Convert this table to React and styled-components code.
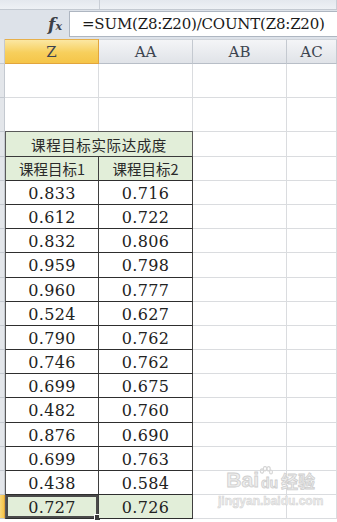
import React from "react";
import styled, { createGlobalStyle } from "styled-components";

const Global = createGlobalStyle`
  html, body { margin: 0; padding: 0; background: #ffffff; }
  body { width: 337px; height: 522px; overflow: hidden; }
`;

const SERIF = `"DejaVu Serif", "Liberation Serif", serif`;

const z = ["0.833", "0.612", "0.832", "0.959", "0.960", "0.524", "0.790", "0.746", "0.699", "0.482", "0.876", "0.699", "0.438", "0.727"];
const aa = ["0.716", "0.722", "0.806", "0.798", "0.777", "0.627", "0.762", "0.762", "0.675", "0.760", "0.690", "0.763", "0.584", "0.726"];

const COLS = "5px 94px 94px 94px 1fr";

const App = () => {
  // row tops in the shot land on 180, 204, 229 ... 519
  const heights = z.map((_, i) => Math.round(180 + (i + 1) * 24.15) - Math.round(180 + i * 24.15));

  return (
    <Page>
      <Global />
      <Ribbon>
        <RibbonPart $w={100} />
        <RibbonPart $w={237} />
      </Ribbon>
      <FormulaBar>
        <FxBox>
          <Fx>f<small>x</small></Fx>
        </FxBox>
        <FormulaInput>=SUM(Z8:Z20)/COUNT(Z8:Z20)</FormulaInput>
      </FormulaBar>
      <Gap />
      <HeaderRow>
        <RowHead />
        <ColHead $active>Z</ColHead>
        <ColHead>AA</ColHead>
        <ColHead>AB</ColHead>
        <ColHead>AC</ColHead>
      </HeaderRow>

      <Row $h={34}>
        <RowHead />
        <Cell /><Cell /><Cell /><Cell />
      </Row>
      <Row $h={34}>
        <RowHead />
        <Cell /><Cell /><Cell /><Cell />
      </Row>

      <Row $h={25}>
        <RowHead />
        <TitleCell>课程目标实际达成度</TitleCell>
        <Cell /><Cell />
      </Row>
      <Row $h={24}>
        <RowHead />
        <SubCell>课程目标1</SubCell>
        <SubCell $last>课程目标2</SubCell>
        <Cell /><Cell />
      </Row>

      {z.map((v, i) => {
        const last = i === z.length - 1;
        return (
          <Row $h={heights[i]} key={`r${i}`}>
            <RowHead $active={last} />
            <DataCell $green={last} $selected={last}>
              {v}
              {last && <Handle />}
            </DataCell>
            <DataCell $green={last} $last>{aa[i]}</DataCell>
            <Cell /><Cell />
          </Row>
        );
      })}

      <Watermark>
        <Brand>
          Bai
          <svg width="14" height="16" viewBox="0 0 14 16">
            <g fill="none" stroke="#d6d6d6" strokeWidth="1.2">
              <ellipse cx="3" cy="5" rx="1.6" ry="2.2" />
              <ellipse cx="6" cy="2.6" rx="1.6" ry="2.2" />
              <ellipse cx="9.6" cy="2.8" rx="1.6" ry="2.2" />
              <ellipse cx="12" cy="6" rx="1.4" ry="2" />
            </g>
          </svg>
          <Du>du</Du>
          <Jy>经验</Jy>
        </Brand>
        <Url>jingyan.baidu.com</Url>
      </Watermark>
    </Page>
  );
};

export default App;

const Page = styled.div`
  position: relative;
  width: 337px;
  height: 522px;
  overflow: hidden;
  background: #ffffff;
  font-family: ${SERIF};
`;

const Ribbon = styled.div`
  display: flex;
  height: 9px;
  background: linear-gradient(#e4e8ee, #eef1f5);
  border-bottom: 1px solid #c3c9d1;
  overflow: hidden;
`;

  const RibbonPart = styled.div`
    width: ${p => p.$w}px;
    border-right: 1px solid #c9ced6;
  `;

const FormulaBar = styled.div`
  display: flex;
  height: 26px;
  background: #dde2e9;
  padding-top: 1px;
`;

  const FxBox = styled.div`
    width: 69px;
    display: flex;
    align-items: center;
    justify-content: flex-end;
    padding-right: 7px;
    box-sizing: border-box;
  `;

  const Fx = styled.span`
    font-family: ${SERIF};
    font-style: italic;
    font-weight: bold;
    font-size: 17px;
    color: #3b4047;
    small { font-size: 11px; }
  `;

  const FormulaInput = styled.div`
    flex: 1;
    height: 24px;
    background: #ffffff;
    border: 1px solid #aeb6c1;
    border-right: none;
    display: flex;
    align-items: center;
    padding-left: 12px;
    font-family: ${SERIF};
    font-size: 15px;
    letter-spacing: -0.2px;
    color: #1a1a1a;
    white-space: nowrap;
  `;

const Gap = styled.div`
  height: 2px;
  background: #dde2e9;
`;

const HeaderRow = styled.div`
  display: grid;
  grid-template-columns: ${COLS};
  height: 25px;
`;

  const ColHead = styled.div`
    display: flex;
    align-items: center;
    justify-content: center;
    font-family: ${SERIF};
    font-size: 15px;
    color: #3c4450;
    background: ${p => p.$active
      ? "linear-gradient(#fbe7a2, #f7cf5c 55%, #f5c548)"
      : "linear-gradient(#f4f5f7, #e0e3e8)"};
    border-right: 1px solid ${p => p.$active ? "#e2a53c" : "#c4c9d0"};
    border-bottom: 1px solid ${p => p.$active ? "#e2a53c" : "#b8bec7"};
    border-top: 1px solid ${p => p.$active ? "#e7b04b" : "#d0d4da"};
    box-sizing: border-box;
  `;

const Row = styled.div`
  display: grid;
  grid-template-columns: ${COLS};
  height: ${p => p.$h}px;
`;

  const RowHead = styled.div`
    background: ${p => p.$active ? "linear-gradient(90deg, #f9d77a, #f5c548)" : "#e3e6ea"};
    border-right: 1px solid ${p => p.$active ? "#e2a53c" : "#c4c9d0"};
    border-bottom: 1px solid #c4c9d0;
    box-sizing: border-box;
  `;

  const Cell = styled.div`
    border-right: 1px solid #dadcdf;
    border-bottom: 1px solid #dadcdf;
    box-sizing: border-box;
  `;

  const TitleCell = styled.div`
    grid-column: span 2;
    display: flex;
    align-items: center;
    justify-content: center;
    background: #e2eed9;
    border: 1px solid #5a5a5a;
    border-bottom: 1px solid #3a3a3a;
    margin-top: -1px;
    box-sizing: border-box;
    font-family: "Noto Sans CJK SC", sans-serif;
    font-size: 14.5px;
    letter-spacing: 0.6px;
    color: #2a2a2a;
  `;

  const SubCell = styled.div`
    display: flex;
    align-items: center;
    justify-content: center;
    background: #e2eed9;
    border-left: ${p => p.$last ? "none" : "1px solid #5a5a5a"};
    border-right: 1px solid #3f3f3f;
    border-bottom: 1px solid #2e2e2e;
    box-sizing: border-box;
    font-family: "Noto Sans CJK SC", sans-serif;
    font-size: 14.5px;
    color: #2a2a2a;
  `;

  const DataCell = styled.div`
    position: relative;
    display: flex;
    align-items: center;
    justify-content: center;
    background: ${p => p.$green ? "#e2eed9" : "#ffffff"};
    border-left: ${p => p.$last ? "none" : "1px solid #5a5a5a"};
    border-right: 1px solid #3f3f3f;
    border-bottom: 1px solid #2e2e2e;
    box-shadow: ${p => p.$selected ? "inset 0 0 0 2px #4a4a4a" : "none"};
    box-sizing: border-box;
    font-family: ${SERIF};
    font-size: 16px;
    letter-spacing: 0.3px;
    color: #222222;
    padding-top: 1px;
  `;

  const Handle = styled.span`
    position: absolute;
    right: -3px;
    bottom: -3px;
    width: 5px;
    height: 5px;
    background: #3a3a3a;
    border: 1px solid #ffffff;
  `;

const Watermark = styled.div`
  position: absolute;
  left: 218px;
  top: 466px;
  display: flex;
  flex-direction: column;
  align-items: center;
  color: #d9d9d9;
  pointer-events: none;
`;

  const Brand = styled.div`
    display: flex;
    align-items: flex-end;
    font-family: "Liberation Sans", sans-serif;
    font-weight: bold;
    font-size: 21px;
    line-height: 24px;
    color: #ededed;
    -webkit-text-stroke: 0.8px #cfcfcf;
    svg { margin: 0 0 10px 0; }
  `;

  const Du = styled.span`
    font-size: 14px;
    line-height: 18px;
    margin-left: -12px;
  `;

  const Jy = styled.span`
    font-family: "Noto Sans CJK SC", sans-serif;
    font-size: 17px;
    line-height: 22px;
    margin-left: 3px;
  `;

  const Url = styled.div`
    font-family: "Liberation Sans", sans-serif;
    font-size: 12px;
    font-weight: bold;
    color: #ececec;
    -webkit-text-stroke: 0.5px #d2d2d2;
    margin-top: 2px;
  `;
